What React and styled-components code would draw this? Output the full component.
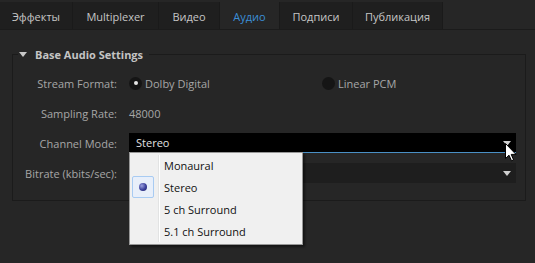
import React from "react";
import styled, { createGlobalStyle } from "styled-components";

const Global = createGlobalStyle`
  html, body {
    margin: 0;
    padding: 0;
    background: #262626;
  }
  body {
    font-family: "Open Sans", "Liberation Sans", sans-serif;
    font-size: 11px;
  }
`;

const Screen = styled.div`
  position: relative;
  width: 535px;
  height: 263px;
  overflow: hidden;
  background: #262626;
  display: flex;
  flex-direction: column;
`;

const TabBar = styled.div`
  display: flex;
  align-items: flex-end;
  height: 29px;
  border-bottom: 1px solid #1b1b1b;
`;

const Tab = styled.div`
  width: ${(p) => p.width}px;
  height: 27px;
  box-sizing: border-box;
  padding-top: 2px;
  display: flex;
  align-items: center;
  justify-content: center;
  background: ${(p) => (p.active ? "#262626" : "#1f1f1f")};
  border-right: 1px solid #1a1a1a;
  color: ${(p) => (p.active ? "#3b8fd8" : "#c6c6c6")};
  font-size: 11px;
  white-space: nowrap;
`;

const Group = styled.fieldset`
  margin: 17px 9px 0 12px;
  padding: 0 9px 17px 0;
  border: 1px solid #1b1b1b;
  min-width: 0;
`;

const Legend = styled.legend`
  margin-left: 5px;
  padding: 0 6px 0 1px;
  display: flex;
  align-items: center;
  gap: 8px;
  line-height: 15px;
  font-weight: bold;
  font-size: 11px;
  color: #c4c4c4;
`;

const Caret = styled.span`
  width: 0;
  height: 0;
  border-left: 4px solid transparent;
  border-right: 4px solid transparent;
  border-top: 5px solid #c8c8c8;
`;

const Form = styled.div`
  display: grid;
  grid-template-columns: 104px 1fr;
  column-gap: 12px;
  row-gap: 10px;
  padding-top: 11px;
`;

const Label = styled.div`
  height: 20px;
  display: flex;
  align-items: center;
  justify-content: flex-end;
  color: #a6a6a6;
  white-space: nowrap;
`;

const Value = styled.div`
  height: 20px;
  display: flex;
  align-items: center;
  color: #a6a6a6;
`;

const RadioGroup = styled.div`
  display: grid;
  grid-template-columns: 193px 1fr;
  height: 20px;
  align-items: center;
`;

const RadioOption = styled.div`
  display: flex;
  align-items: center;
  gap: 3px;
  color: #a6a6a6;
`;

const RadioDot = styled.span`
  width: 13px;
  height: 13px;
  border-radius: 50%;
  background: #151515;
  display: flex;
  align-items: center;
  justify-content: center;
  &::after {
    content: "";
    width: 4px;
    height: 4px;
    border-radius: 50%;
    background: ${(p) => (p.checked ? "#e6e6e6" : "transparent")};
  }
`;

const Select = styled.div`
  position: relative;
  height: 20px;
  box-sizing: border-box;
  display: flex;
  align-items: center;
  justify-content: space-between;
  padding: 0 5px 0 7px;
  background: ${(p) => (p.open ? "#000" : "#1e1e1e")};
  border-bottom: 1px solid ${(p) => (p.open ? "#4a8fc4" : "#1e1e1e")};
  color: #e2e2e2;
`;

const Arrow = styled.span`
  width: 0;
  height: 0;
  border-left: 4px solid transparent;
  border-right: 4px solid transparent;
  border-top: 5px solid #cfcfcf;
  margin-top: 1px;
`;

const Menu = styled.div`
  position: absolute;
  left: 129px;
  top: 152px;
  width: 174px;
  box-sizing: border-box;
  padding: 1px 2px 2px 2px;
  background: #f0f0f0;
  border: 1px solid #979797;
  box-shadow: 2px 2px 2px rgba(0, 0, 0, 0.45);
  z-index: 5;
  &::before {
    content: "";
    position: absolute;
    top: 2px;
    bottom: 2px;
    left: 28px;
    width: 1px;
    background: #e2e3e3;
    border-right: 1px solid #ffffff;
  }
`;

const MenuItem = styled.div`
  display: flex;
  align-items: center;
  height: 22px;
  color: #111;
  font-size: 11px;
`;

const Check = styled.span`
  width: 22px;
  height: 22px;
  box-sizing: border-box;
  margin-right: 10px;
  display: flex;
  align-items: center;
  justify-content: center;
  border: 1px solid ${(p) => (p.checked ? "#a8cbf2" : "transparent")};
  border-radius: 2px;
  background: ${(p) => (p.checked ? "#e8effa" : "transparent")};
  &::after {
    content: "";
    display: ${(p) => (p.checked ? "block" : "none")};
    width: 8px;
    height: 8px;
    border-radius: 50%;
    background: radial-gradient(circle at 35% 35%, #9aa0e0 0%, #3a3f9a 55%, #1d2066 100%);
  }
`;

const Cursor = styled.svg`
  position: absolute;
  left: 505px;
  top: 143px;
  z-index: 6;
`;

const tabs = [
  { label: "Эффекты", width: 73 },
  { label: "Multiplexer", width: 86 },
  { label: "Видео", width: 61 },
  { label: "Аудио", width: 60, active: true },
  { label: "Подписи", width: 73 },
  { label: "Публикация", width: 90 },
];

const options = ["Monaural", "Stereo", "5 ch Surround", "5.1 ch Surround"];

export default function App() {
  return (
    <Screen>
      <Global />
      <TabBar>
        {tabs.map((t) => (
          <Tab key={t.label} width={t.width} active={t.active}>
            {t.label}
          </Tab>
        ))}
      </TabBar>
      <Group>
        <Legend>
          <Caret />
          Base Audio Settings
        </Legend>
        <Form>
          <Label>Stream Format:</Label>
          <RadioGroup>
            <RadioOption>
              <RadioDot checked />
              Dolby Digital
            </RadioOption>
            <RadioOption>
              <RadioDot />
              Linear PCM
            </RadioOption>
          </RadioGroup>
          <Label>Sampling Rate:</Label>
          <Value>48000</Value>
          <Label>Channel Mode:</Label>
          <Select open>
            Stereo
            <Arrow />
          </Select>
          <Label>Bitrate (kbits/sec):</Label>
          <Select>
            <span />
            <Arrow />
          </Select>
        </Form>
      </Group>
      <Menu>
        {options.map((o) => (
          <MenuItem key={o}>
            <Check checked={o === "Stereo"} />
            {o}
          </MenuItem>
        ))}
      </Menu>
      <Cursor width="12" height="19" viewBox="0 0 12 19">
        <path
          d="M0.5 0.5 L0.5 15.5 L4 12.2 L6.5 17.8 L8.6 16.9 L6.2 11.4 L11 11.4 Z"
          fill="#ffffff"
          stroke="#000000"
          strokeWidth="1"
          strokeLinejoin="miter"
        />
      </Cursor>
    </Screen>
  );
}
